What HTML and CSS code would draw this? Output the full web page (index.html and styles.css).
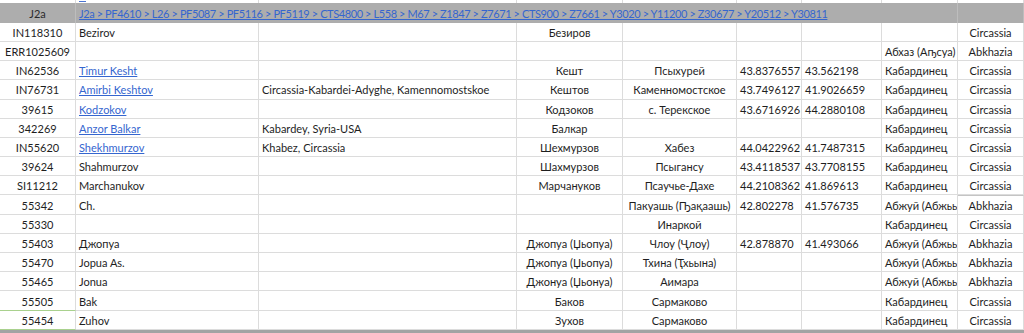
FILE: index.html
```html
<!DOCTYPE html>
<html lang="ru">
<head>
<meta charset="utf-8">
<title>J2a</title>
<link rel="stylesheet" href="styles.css">
</head>
<body>
<div class="sheet">
  <div class="c top"></div><div class="c top"><span class="dash"></span></div><div class="c top"></div><div class="c top"></div><div class="c top"></div><div class="c top"></div><div class="c top"></div><div class="c top"></div><div class="c top"></div>

  <div class="c hd ctr">J2a</div>
  <div class="c hd wide"><a class="lnk path" href="#">J2a &gt; PF4610 &gt; L26 &gt; PF5087 &gt; PF5116 &gt; PF5119 &gt; CTS4800 &gt; L558 &gt; M67 &gt; Z1847 &gt; Z7671 &gt; CTS900 &gt; Z7661 &gt; Y3020 &gt; Y11200 &gt; Z30677 &gt; Y20512 &gt; Y30811</a></div>
  <div class="c hd"></div>

  <div class="c ctr">IN118310</div><div class="c">Bezirov</div><div class="c"></div><div class="c ctr">Безиров</div><div class="c ctr"></div><div class="c"></div><div class="c"></div><div class="c"></div><div class="c ctr">Circassia</div>

  <div class="c ctr">ERR1025609</div><div class="c"></div><div class="c"></div><div class="c ctr"></div><div class="c ctr"></div><div class="c"></div><div class="c"></div><div class="c">Абхаз (Аҧсуа)</div><div class="c ctr">Abkhazia</div>

  <div class="c ctr">IN62536</div><div class="c"><a class="lnk" href="#">Timur Kesht</a></div><div class="c"></div><div class="c ctr">Кешт</div><div class="c ctr">Псыхурей</div><div class="c">43.8376557</div><div class="c">43.562198</div><div class="c">Кабардинец</div><div class="c ctr">Circassia</div>

  <div class="c ctr">IN76731</div><div class="c"><a class="lnk" href="#">Amirbi Keshtov</a></div><div class="c">Circassia-Kabardei-Adyghe, Kamennomostskoe</div><div class="c ctr">Кештов</div><div class="c ctr">Каменномостское</div><div class="c">43.7496127</div><div class="c">41.9026659</div><div class="c">Кабардинец</div><div class="c ctr">Circassia</div>

  <div class="c ctr">39615</div><div class="c"><a class="lnk" href="#">Kodzokov</a></div><div class="c"></div><div class="c ctr">Кодзоков</div><div class="c ctr">с. Терекское</div><div class="c">43.6716926</div><div class="c">44.2880108</div><div class="c">Кабардинец</div><div class="c ctr">Circassia</div>

  <div class="c ctr">342269</div><div class="c"><a class="lnk" href="#">Anzor Balkar</a></div><div class="c">Kabardey, Syria-USA</div><div class="c ctr">Балкар</div><div class="c ctr"></div><div class="c"></div><div class="c"></div><div class="c">Кабардинец</div><div class="c ctr">Circassia</div>

  <div class="c ctr">IN55620</div><div class="c"><a class="lnk" href="#">Shekhmurzov</a></div><div class="c">Khabez, Circassia</div><div class="c ctr">Шехмурзов</div><div class="c ctr">Хабез</div><div class="c">44.0422962</div><div class="c">41.7487315</div><div class="c">Кабардинец</div><div class="c ctr">Circassia</div>

  <div class="c ctr">39624</div><div class="c">Shahmurzov</div><div class="c"></div><div class="c ctr">Шахмурзов</div><div class="c ctr">Псыгансу</div><div class="c">43.4118537</div><div class="c">43.7708155</div><div class="c">Кабардинец</div><div class="c ctr">Circassia</div>

  <div class="c ctr">SI11212</div><div class="c">Marchanukov</div><div class="c"></div><div class="c ctr">Марчануков</div><div class="c ctr">Псаучье-Дахе</div><div class="c">44.2108362</div><div class="c">41.869613</div><div class="c">Кабардинец</div><div class="c ctr">Circassia</div>

  <div class="c ctr">55342</div><div class="c">Ch.</div><div class="c"></div><div class="c ctr"></div><div class="c ctr">Пакуашь (Ҧақаашь)</div><div class="c">42.802278</div><div class="c">41.576735</div><div class="c">Абжуй (Абжьыуа)</div><div class="c ctr mark">Abkhazia</div>

  <div class="c ctr">55330</div><div class="c"></div><div class="c"></div><div class="c ctr"></div><div class="c ctr">Инаркой</div><div class="c"></div><div class="c"></div><div class="c">Кабардинец</div><div class="c ctr">Circassia</div>

  <div class="c ctr">55403</div><div class="c">Джопуа</div><div class="c"></div><div class="c ctr">Джопуа (Џьопуа)</div><div class="c ctr">Члоу (Ҷлоу)</div><div class="c">42.878870</div><div class="c">41.493066</div><div class="c">Абжуй (Абжьыуа)</div><div class="c ctr">Abkhazia</div>

  <div class="c ctr">55470</div><div class="c">Jopua As.</div><div class="c"></div><div class="c ctr">Джопуа (Џьопуа)</div><div class="c ctr">Тхина (Ҭхьына)</div><div class="c"></div><div class="c"></div><div class="c">Абжуй (Абжьыуа)</div><div class="c ctr">Abkhazia</div>

  <div class="c ctr">55465</div><div class="c">Jonua</div><div class="c"></div><div class="c ctr">Джонуа (Џьонуа)</div><div class="c ctr">Аимара</div><div class="c"></div><div class="c"></div><div class="c">Абжуй (Абжьыуа)</div><div class="c ctr">Abkhazia</div>

  <div class="c ctr green">55505</div><div class="c">Bak</div><div class="c"></div><div class="c ctr">Баков</div><div class="c ctr">Сармаково</div><div class="c"></div><div class="c"></div><div class="c">Кабардинец</div><div class="c ctr">Circassia</div>

  <div class="c ctr green">55454</div><div class="c">Zuhov</div><div class="c"></div><div class="c ctr">Зухов</div><div class="c ctr">Сармаково</div><div class="c"></div><div class="c"></div><div class="c">Кабардинец</div><div class="c ctr">Circassia</div>

  <div class="bar"></div>
</div>
</body>
</html>
```

FILE: styles.css
```css
html, body {
  margin: 0;
  padding: 0;
  background: #ffffff;
}

.sheet {
  display: grid;
  grid-template-columns: 76px 183px 258px 106px 114px 65px 80px 76px 66px;
  grid-template-rows: 3px 19.8px repeat(16, 19.2px) 3px;
  width: 1024px;
  height: 333px;
  overflow: hidden;
  font-family: Lato, "Noto Sans", sans-serif;
  font-size: 11px;
  color: #1e1e1e;
}

.c {
  box-sizing: border-box;
  border-right: 1px solid #dcdcdc;
  border-bottom: 1px solid #dcdcdc;
  padding: 1px 3px 0 3px;
  display: flex;
  align-items: center;
  white-space: nowrap;
  overflow: hidden;
  min-width: 0;
}

.ctr {
  justify-content: center;
}

.top {
  border-bottom: none;
  padding: 0 3px;
  align-items: flex-start;
}

.dash {
  display: block;
  width: 7px;
  height: 1px;
  margin-top: 1px;
  background: #4a74d2;
}

.hd {
  background: #adadad;
  border-bottom: none;
  border-right-color: #bdbdbd;
  color: #2a2a2a;
}

.wide {
  grid-column: 2 / 9;
}

.lnk {
  color: #3566cf;
  text-decoration: underline;
  text-underline-offset: 1px;
}

.path {
  letter-spacing: -0.4px;
}

.mark {
  border-top: 1px solid #c4c4c4;
}

.green {
  border-bottom-color: #a9d18e;
}

.bar {
  grid-column: 1 / -1;
  background: #a3a3a3;
}
```
